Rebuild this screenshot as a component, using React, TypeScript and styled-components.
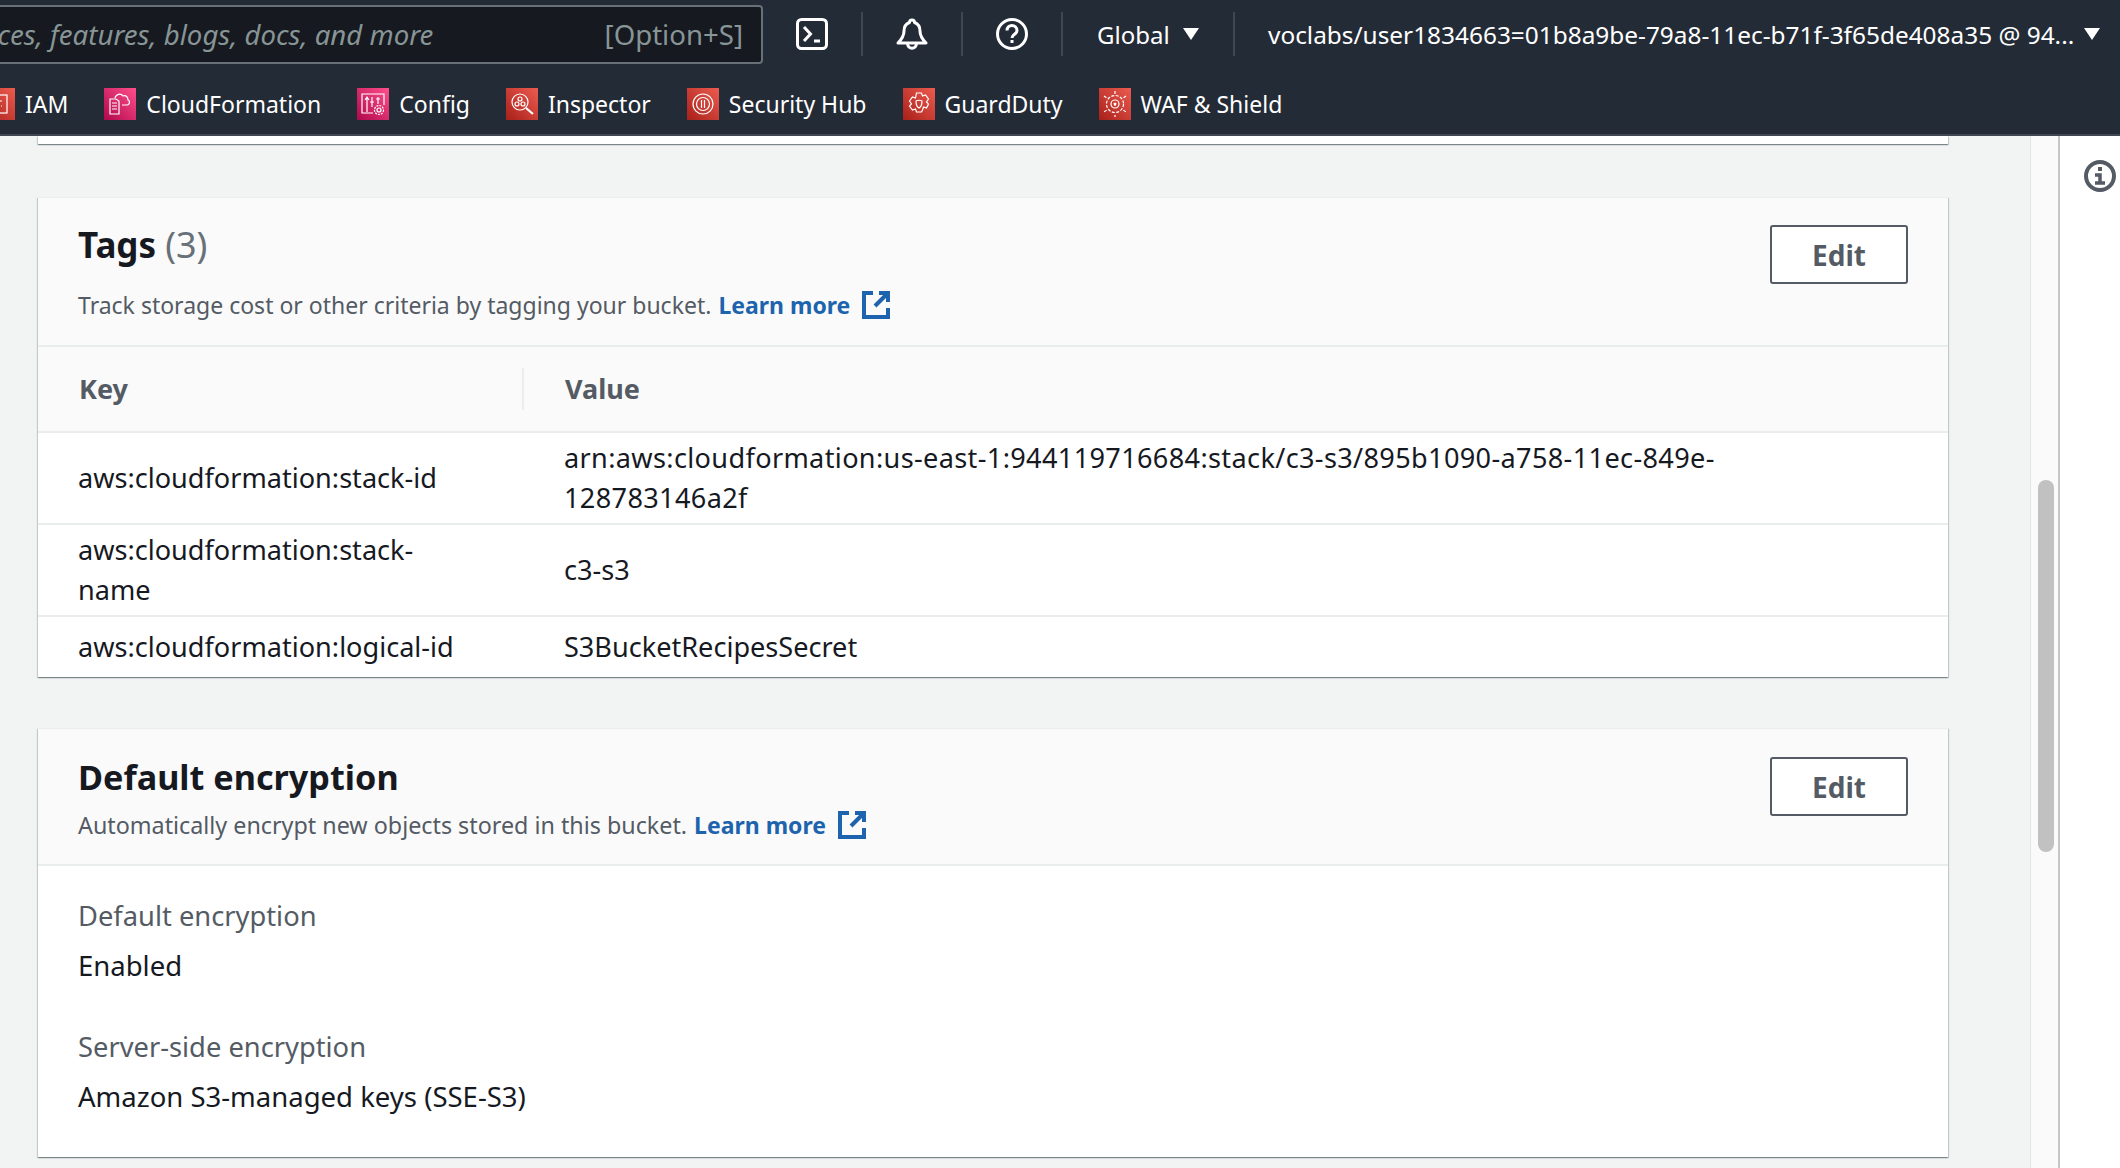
import React from "react";
import styled, { createGlobalStyle } from "styled-components";

const Global = createGlobalStyle`
  html, body { margin: 0; padding: 0; width: 2120px; height: 1168px; overflow: hidden; background: #f2f3f3; }
  body { font-family: "Noto Sans", "Liberation Sans", sans-serif; }
  * { box-sizing: border-box; }
`;

const Page = styled.div`display:flex;flex-direction:column;width:2120px;height:1168px;overflow:hidden;`;
const TopBar = styled.header`flex:none;height:136px;background:#232b37;border-bottom:2px solid #414750;color:#fff;overflow:hidden;`;
const UtilityRow = styled.div`display:flex;align-items:center;height:68px;`;
const SearchBox = styled.div`flex:none;display:flex;align-items:center;justify-content:space-between;width:978px;height:59px;margin-left:-215px;padding:0 18px 0 22px;background:#16191f;border:2px solid #687078;border-radius:4px;font-size:27.6px;color:#879596;white-space:nowrap;`;
const Placeholder = styled.span`font-style:italic;`;
const ToolCell = styled.div`flex:none;display:flex;align-items:center;justify-content:center;width:100px;height:44px;border-right:2px solid #414750;`;
const Region = styled.div`flex:none;display:flex;align-items:center;width:172px;height:44px;padding-left:34px;font-size:24px;gap:13px;border-right:2px solid #414750;`;
const Account = styled.div`flex:none;display:flex;align-items:center;padding-left:33px;font-size:24.4px;gap:10px;white-space:nowrap;`;
const Caret = styled.span`display:block;width:0;height:0;border-left:8px solid transparent;border-right:8px solid transparent;border-top:12px solid #fff;`;
const NavRow = styled.nav`display:flex;align-items:center;height:66px;padding-top:6px;margin-left:-17px;gap:36px;`;
const NavItem = styled.div`flex:none;display:flex;align-items:center;gap:10px;font-size:23px;line-height:32px;`;
const Tile = styled.span<{ $kind: "pink" | "red" }>`
  flex:none;display:block;width:32px;height:32px;
  background:${(p) => p.$kind === "pink" ? "linear-gradient(45deg,#b0084d,#ff4f8b)" : "linear-gradient(45deg,#a8201a,#ec5b4f)"};
`;
const TileSvg = styled.svg`display:block;width:32px;height:32px;fill:none;stroke:#fff;stroke-width:1.2;`;
const ToolIcon = styled.svg`display:block;width:32px;height:32px;fill:none;stroke:#fff;stroke-width:3;`;

const Body = styled.div`flex:1;display:flex;min-height:0;`;
const Main = styled.main`flex:none;width:2031px;padding:0 82px 0 38px;background:#f2f3f3;border-right:1px solid #e4e6e6;`;
const Rail = styled.div`flex:none;width:29px;padding:344px 4px 0 7px;background:#fafafa;border-right:2px solid #c4c6c8;`;
const Thumb = styled.div`width:16px;height:372px;border-radius:8px;background:#c1c1c1;`;
const Side = styled.aside`flex:1;display:flex;justify-content:flex-end;padding:24px 4px 0 0;background:#fff;`;
const InfoIcon = styled.svg`display:block;width:32px;height:32px;fill:none;stroke:#545b64;stroke-width:4;`;

const Card = styled.section`background:#fff;box-shadow:0 1px 1px 0 rgba(0,28,36,.3),1px 1px 1px 0 rgba(0,28,36,.15),-1px 1px 1px 0 rgba(0,28,36,.15);border-top:1px solid #eaeded;`;
const CardStub = styled(Card)`height:8px;margin-bottom:53px;border-top:0;`;
const SpacedCard = styled(Card)`margin-bottom:51px;`;
const CardHead = styled.div<{ $top: number; $bottom: number }>`
  display:flex;justify-content:space-between;align-items:flex-start;
  padding:${(p) => p.$top}px 40px ${(p) => p.$bottom}px 40px;background:#fafafa;border-bottom:2px solid #eaeded;
`;
const Title = styled.h2<{ $size: number }>`margin:0;font-size:${(p) => p.$size}px;line-height:44px;font-weight:700;color:#16191f;`;
const Count = styled.span`font-size:36px;font-weight:400;color:#687078;`;
const Sub = styled.p<{ $gap: number; $size: number }>`display:flex;align-items:center;margin:${(p) => p.$gap}px 0 0;font-size:${(p) => p.$size}px;line-height:40px;color:#545b64;`;
const Learn = styled.a`margin-left:7px;font-size:23px;font-weight:700;color:#1d63ad;`;
const ExtIcon = styled.svg`display:block;width:28px;height:28px;margin-left:12px;fill:none;stroke:#1d63ad;stroke-width:2;`;
const EditButton = styled.button<{ $top: number }>`flex:none;width:138px;height:59px;margin-top:${(p) => p.$top}px;background:#fff;border:2px solid #545b64;border-radius:3px;font:700 28px "Noto Sans",sans-serif;color:#545b64;`;

const HeadRow = styled.div`display:grid;grid-template-columns:486px 1fr;align-items:center;height:86px;background:#fafafa;border-bottom:2px solid #eaeded;`;
const HeadCell = styled.div`height:42px;padding-left:41px;line-height:42px;font-size:27px;font-weight:700;color:#545b64;`;
const KeyHead = styled(HeadCell)`border-right:2px solid #eaeded;`;
const Row = styled.div<{ $h: number; $last?: boolean }>`
  display:grid;grid-template-columns:486px 1fr;align-items:center;min-height:${(p) => p.$h}px;
  border-bottom:${(p) => p.$last ? "0" : "2px solid #eaeded"};
`;
const KeyCell = styled.div`padding:0 56px 0 40px;font-size:27.1px;line-height:40px;color:#16191f;`;
const ValueCell = styled.div`padding:0 200px 0 40px;font-size:27.1px;line-height:40px;color:#16191f;`;
const ArnCell = styled(ValueCell)`letter-spacing:.35px;`;

const Details = styled.div`padding:30px 40px 40px;`;
const Field = styled.div`margin-bottom:41px;&:last-child{margin-bottom:0;}`;
const Label = styled.div`font-size:27.3px;line-height:40px;color:#545b64;margin-bottom:10px;`;
const Value = styled.div`font-size:27.5px;line-height:40px;color:#16191f;`;

const External = () => (
  <ExtIcon viewBox="0 0 14 14"><path d="M5.5 1H1v12h12V8.5" /><path d="M8.5 1H13v4.5" /><path d="M13 1 6.5 7.5" /></ExtIcon>
);

const nav: { label: string; kind: "pink" | "red"; art: React.ReactNode }[] = [
  { label: "IAM", kind: "red", art: <><rect x="8" y="7" width="16" height="18" /><path d="M13 13h6M13 18h2M18 18h1" /></> },
  { label: "CloudFormation", kind: "pink", art: <><path d="M12 11H6v15h9V13z" /><path d="M8 15h5M8 18h5M8 21h5" /><path d="M11 10c1-4 6-5 8-2 3-1 5 1 5 4 2 0 2 5-1 5h-5" /></> },
  { label: "Config", kind: "pink", art: <><path d="M16 25H5V6h22v11" /><path d="M10 24V10M8 12l2-3 2 3M15 19V9M13 14h4M21 16V9M19 11h4" /><circle cx="22" cy="22" r="2" /><circle cx="22" cy="22" r="4.500" strokeDasharray="2 1" /></> },
  { label: "Inspector", kind: "red", art: <><circle cx="14" cy="14" r="8" /><circle cx="14" cy="11" r="2" /><circle cx="11" cy="16" r="2" /><circle cx="17" cy="16" r="2" /><path d="M20 20l7 6" strokeWidth="2.2" /></> },
  { label: "Security Hub", kind: "red", art: <><circle cx="16" cy="16" r="10" /><circle cx="16" cy="16" r="6.500" /><path d="M14.500 12v8M17.500 12v8" /></> },
  { label: "GuardDuty", kind: "red", art: <><path d="M13.500 5h5l1 3 3-1 3 4-2 3 2 2-2 4-3-1-1 3-1 2h-5l-1-3-3 1-3-4 2-2-2-3 3-4 3 1z" /><path d="M13 13c2-1 4-1 6 0 0 4-1 6-3 7-2-1-3-3-3-7z" /></> },
  { label: "WAF & Shield", kind: "red", art: <><circle cx="16" cy="16" r="8.500" strokeDasharray="3 1.5" /><circle cx="16" cy="16" r="4" /><path d="M16 3v26M5 8l22 16M27 8 5 24" strokeDasharray="3 9" /></> },
];

export default function App() {
  return (
    <Page>
      <Global />
      <TopBar>
        <UtilityRow>
          <SearchBox>
            <Placeholder>Search for services, features, blogs, docs, and more</Placeholder>
            <span>[Option+S]</span>
          </SearchBox>
          <ToolCell>
            <ToolIcon viewBox="0 0 32 32"><rect x="1.500" y="1.500" width="29" height="29" rx="4" /><path d="M8 9l6.500 7L8 23" /><path d="M18 23h6" /></ToolIcon>
          </ToolCell>
          <ToolCell>
            <ToolIcon viewBox="0 0 32 32"><path d="M16 2c1.500 0 2.500 1 2.500 2.500C22.500 6 24 9 24 13c0 5 3 9 6 12H2c3-3 6-7 6-12 0-4 1.500-7 5.500-8.500C13.500 3 14.500 2 16 2z" strokeLinejoin="round" /><path d="M11.500 25c0 7 9 7 9 0" /></ToolIcon>
          </ToolCell>
          <ToolCell>
            <ToolIcon viewBox="0 0 32 32"><circle cx="16" cy="16" r="14.500" /><path d="M11 12.500c0-7 10-6.500 10 0 0 4-5 3.500-5 7.500" /><path d="M16 22v3" /></ToolIcon>
          </ToolCell>
          <Region>Global <Caret /></Region>
          <Account>voclabs/user1834663=01b8a9be-79a8-11ec-b71f-3f65de408a35 @ 94... <Caret /></Account>
        </UtilityRow>
        <NavRow>
          {nav.map((n) => (
            <NavItem key={n.label}>
              <Tile $kind={n.kind}><TileSvg viewBox="0 0 32 32">{n.art}</TileSvg></Tile>
              {n.label}
            </NavItem>
          ))}
        </NavRow>
      </TopBar>
      <Body>
        <Main>
          <CardStub />
          <SpacedCard>
            <CardHead $top={25} $bottom={20}>
              <div>
                <Title $size={35}>Tags <Count>(3)</Count></Title>
                <Sub $gap={18} $size={23}>Track storage cost or other criteria by tagging your bucket.<Learn>Learn more</Learn><External /></Sub>
              </div>
              <EditButton $top={2}>Edit</EditButton>
            </CardHead>
            <HeadRow>
              <KeyHead>Key</KeyHead>
              <HeadCell>Value</HeadCell>
            </HeadRow>
            <Row $h={92}>
              <KeyCell>aws:cloudformation:stack-id</KeyCell>
              <ArnCell>arn:aws:cloudformation:us-east-1:944119716684:stack/c3-s3/895b1090-a758-11ec-849e-128783146a2f</ArnCell>
            </Row>
            <Row $h={92}>
              <KeyCell>aws:cloudformation:stack-name</KeyCell>
              <ValueCell>c3-s3</ValueCell>
            </Row>
            <Row $h={60} $last>
              <KeyCell>aws:cloudformation:logical-id</KeyCell>
              <ValueCell>S3BucketRecipesSecret</ValueCell>
            </Row>
          </SpacedCard>
          <Card>
            <CardHead $top={26} $bottom={19}>
              <div>
                <Title $size={34.2}>Default encryption</Title>
                <Sub $gap={6} $size={23.3}>Automatically encrypt new objects stored in this bucket.<Learn>Learn more</Learn><External /></Sub>
              </div>
              <EditButton $top={2}>Edit</EditButton>
            </CardHead>
            <Details>
              <Field><Label>Default encryption</Label><Value>Enabled</Value></Field>
              <Field><Label>Server-side encryption</Label><Value>Amazon S3-managed keys (SSE-S3)</Value></Field>
            </Details>
          </Card>
        </Main>
        <Rail><Thumb /></Rail>
        <Side>
          <InfoIcon viewBox="0 0 32 32"><circle cx="16" cy="16" r="14" /><path d="M16 7v4" /><path d="M11 15h5v8M11 23h10" strokeWidth="3.500" /></InfoIcon>
        </Side>
      </Body>
    </Page>
  );
}
